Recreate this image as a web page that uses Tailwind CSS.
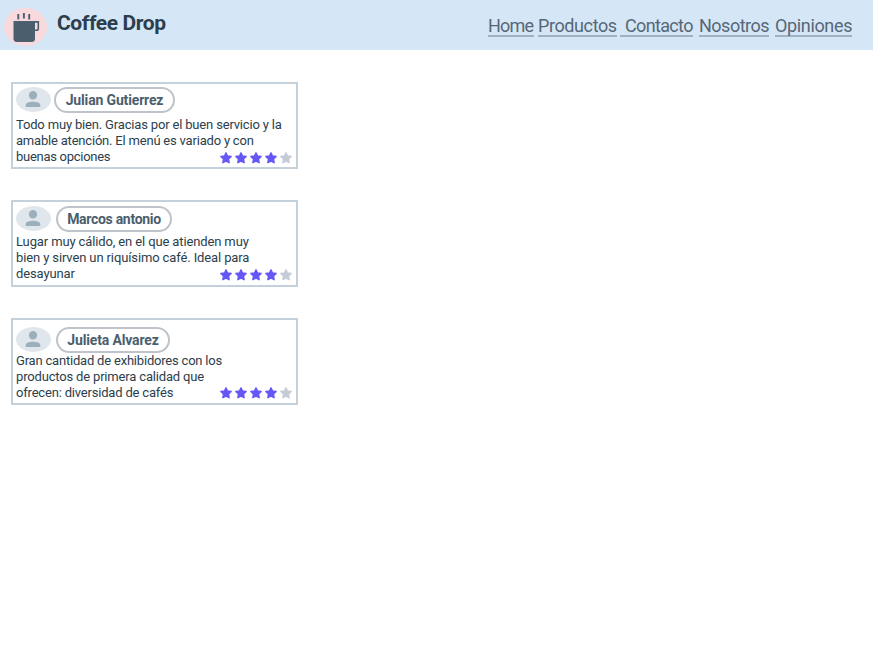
<!DOCTYPE html>
<html lang="es">
<head>
<meta charset="utf-8">
<title>Coffee Drop</title>
<script src="https://cdn.jsdelivr.net/npm/@tailwindcss/browser@4"></script>
</head>
<body class="bg-white font-['Roboto','Liberation_Sans',sans-serif] text-[#2c3e4c]">
<svg class="hidden">
  <symbol id="star" viewBox="0 0 12 12"><path d="M6 .8 7.6 4 11.2 4.5 8.6 7.1 9.2 10.8 6 9.1 2.8 10.8 3.4 7.1.8 4.5 4.4 4Z" fill="currentColor" stroke="currentColor" stroke-width="1.3" stroke-linejoin="round"/></symbol>
  <symbol id="user" viewBox="0 0 35 25"><ellipse cx="17.5" cy="12.5" rx="17.5" ry="12.5" fill="#e0e7ec"/><ellipse cx="17" cy="8.2" rx="4.1" ry="4.3" fill="#9cafbd"/><path d="M9.700 20v-2c0-2.500 4-3.300 7.300-3.300s7.300.8 7.300 3.300V20Z" fill="#9cafbd"/></symbol>
</svg>
<header class="flex h-[50px] items-start bg-[#d5e6f6] pl-1">
  <svg class="mt-[8px] h-[38px] w-[43px]" viewBox="0 0 43 38"><ellipse cx="21.5" cy="19" rx="21.5" ry="19" fill="#f8d9de"/><path d="M9.500 13H31v17.500q0 3.500-3.500 3.500H13q-3.500 0-3.500-3.500Z" fill="#4b5e6d"/><path d="M30 13.900h4.300v6.600q0 1.800-1.800 1.800H30" fill="none" stroke="#4b5e6d" stroke-width="1.600"/><path d="M14.300 6v5.500M19.900 5v5.500M25.200 6v5.500" stroke="#4b5e6d" stroke-width="1.900"/></svg>
  <h1 class="ml-[10px] mt-[9px] whitespace-nowrap text-[21px] font-bold leading-7 tracking-[-0.4px]">Coffee Drop</h1>
  <nav class="ml-auto mr-[21px] mt-[15px] flex text-[18px] leading-[22px] text-[#566878] *:h-[22px] *:whitespace-nowrap *:border-b-2 *:border-[#9fb1c4]">
    <a class="w-[46px] tracking-[-0.8px]">Home</a>
    <a class="ml-1 w-[79px] tracking-[-0.4px]">Productos</a>
    <a class="ml-[3px] w-[73px] pl-[5px] tracking-[-0.65px]">Contacto</a>
    <a class="ml-[6px] w-[70px] tracking-[-0.5px]">Nosotros</a>
    <a class="ml-[6px] w-[77px] tracking-[-0.35px]">Opiniones</a>
  </nav>
</header>
<main class="ml-[11px] mt-8 flex w-[287px] flex-col gap-[31px] text-[13px] leading-4">
  <article class="h-[87px] border-2 border-[#c4d0da] pl-[3px]">
    <div class="flex h-[33px] pt-[3px]">
      <svg class="h-[25px] w-[35px]"><use href="#user"/></svg>
      <h2 class="ml-[3px] h-[26px] w-[121px] whitespace-nowrap rounded-full border-2 border-[#bfc4ca] text-center text-[14px] font-bold leading-[23px] tracking-[-0.15px] text-[#4b5e6d]">Julian Gutierrez</h2>
    </div>
    <p class="whitespace-nowrap tracking-[-0.17px]">Todo muy bien. Gracias por el buen servicio y la</p>
    <p class="whitespace-nowrap tracking-[-0.2px]">amable atención. El menú es variado y con</p>
    <div class="flex justify-between whitespace-nowrap"><p class="tracking-[-0.28px]">buenas opciones</p>
      <div class="mr-[4px] mt-[3px] flex gap-[3px] text-[#6457f5] *:size-3"><svg><use href="#star"/></svg><svg><use href="#star"/></svg><svg><use href="#star"/></svg><svg><use href="#star"/></svg><svg class="text-[#c4cdd7]"><use href="#star"/></svg></div>
    </div>
  </article>
  <article class="h-[87px] border-2 border-[#c4d0da] pl-[3px]">
    <div class="flex h-[32px] pt-[4px]">
      <svg class="h-[25px] w-[35px]"><use href="#user"/></svg>
      <h2 class="ml-[5px] h-[26px] w-[116px] whitespace-nowrap rounded-full border-2 border-[#bfc4ca] text-center text-[14px] font-bold leading-[23px] tracking-[-0.3px] text-[#4b5e6d]">Marcos antonio</h2>
    </div>
    <p class="whitespace-nowrap tracking-[-0.125px]">Lugar muy cálido, en el que atienden muy</p>
    <p class="whitespace-nowrap tracking-[-0.12px]">bien y sirven un riquísimo café. Ideal para</p>
    <div class="flex justify-between whitespace-nowrap"><p class="tracking-[-0.12px]">desayunar</p>
      <div class="mr-[4px] mt-[3px] flex gap-[3px] text-[#6457f5] *:size-3"><svg><use href="#star"/></svg><svg><use href="#star"/></svg><svg><use href="#star"/></svg><svg><use href="#star"/></svg><svg class="text-[#c4cdd7]"><use href="#star"/></svg></div>
    </div>
  </article>
  <article class="h-[87px] border-2 border-[#c4d0da] pl-[3px]">
    <div class="flex h-[33px] pt-[7px]">
      <svg class="h-[25px] w-[35px]"><use href="#user"/></svg>
      <h2 class="ml-[5px] h-[26px] w-[114px] whitespace-nowrap rounded-full border-2 border-[#bfc4ca] text-center text-[14px] font-bold leading-[23px] tracking-[-0.15px] text-[#4b5e6d]">Julieta Alvarez</h2>
    </div>
    <p class="whitespace-nowrap tracking-[-0.2px]">Gran cantidad de exhibidores con los</p>
    <p class="whitespace-nowrap tracking-[-0.17px]">productos de primera calidad que</p>
    <div class="flex justify-between whitespace-nowrap"><p class="tracking-[-0.19px]">ofrecen: diversidad de cafés</p>
      <div class="mr-[4px] mt-[2px] flex gap-[3px] text-[#6457f5] *:size-3"><svg><use href="#star"/></svg><svg><use href="#star"/></svg><svg><use href="#star"/></svg><svg><use href="#star"/></svg><svg class="text-[#c4cdd7]"><use href="#star"/></svg></div>
    </div>
  </article>
</main>
</body>
</html>
